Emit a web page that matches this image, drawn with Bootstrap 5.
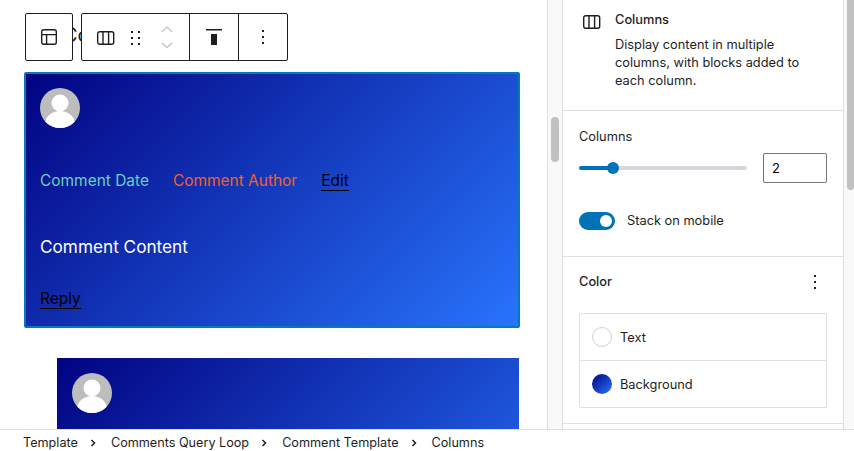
<!DOCTYPE html>
<html lang="en">
<head>
<meta charset="utf-8">
<title>Columns</title>
<link href="https://cdn.jsdelivr.net/npm/bootstrap@5.3.0/dist/css/bootstrap.min.css" rel="stylesheet">
<style>
html,body{height:451px;overflow:hidden;}
body{font-family:Inter,"Liberation Sans",sans-serif;font-size:12.8px;color:#1e1e1e;background:#fff;}
.shell{height:451px;}
.workarea{height:429px;overflow:hidden;}
.canvas-pane{width:547px;flex:none;overflow:hidden;position:relative;padding:0 27px 0 24px;}
.bg-title{font-size:20px;line-height:24px;height:72px;padding:23px 0 0 39px;margin:0;font-weight:400;color:#1e1e1e;}
.comment-block{height:256px;border:2px solid #007cba;border-radius:2px;padding:14px;background:linear-gradient(135deg,#020381 0%,#2874fc 100%);color:#fff;font-size:15.46px;}
.comment-nested{margin:30px 1px 0 33px;border:0;border-radius:0;padding:15px;}
.avatar-svg{display:block;width:40px;height:40px;}
.meta-row{gap:24px;margin-top:43px;line-height:20px;}
.c-date{color:#68d0c0;}
.c-author{color:#f0602a;}
.c-link{color:#000;text-decoration:none;border-bottom:1px solid #000;line-height:19px;display:inline-block;}
.c-body{margin-top:44px;line-height:24px;font-size:17.2px;}
.c-reply{margin-top:28px;}
.tool-group{position:absolute;top:13px;height:48px;background:#fff;border:1px solid #1e1e1e;border-radius:2px;display:flex;}
.tg-a{left:25px;width:48px;}
.tg-b{left:81px;width:207px;}
.tool-cell{display:flex;align-items:center;justify-content:center;height:100%;}
.tool-cell+.tool-cell{border-left:1px solid #1e1e1e;}
.cell-move{width:107px;position:relative;}
.cell-align{width:49px;}
.cell-more{width:49px;}
.rail{width:15px;flex:none;background:#f9f9f9;border-left:1px solid #e0e0e0;position:relative;}
.rail-thumb{width:8px;height:45px;background:#c1c1c1;border-radius:4px;margin:117px 0 0 3px;}
.inspector{width:282px;flex:none;border-left:1px solid #e0e0e0;border-right:1px solid #e0e0e0;background:#fff;}
.rail-end{width:10px;flex:none;background:#f9f9f9;}
.rail-end-thumb{width:7px;height:190px;background:#c1c1c1;border-radius:0 0 4px 4px;margin-left:3px;}
.card-head{height:111px;padding:11px 16px 0 20px;border-bottom:1px solid #e0e0e0;gap:14px;}
.card-title{font-weight:500;line-height:17px;margin-bottom:8px;}
.card-desc{line-height:18px;width:200px;}
.panel-settings{height:146px;padding:17px 16px 0;border-bottom:1px solid #e0e0e0;}
.lbl{line-height:18px;margin-bottom:7px;}
.range-row{gap:16px;height:30px;}
.wp-range{width:168px;height:14px;flex:none;padding:0;}
.wp-range::-webkit-slider-runnable-track{height:4px;border-radius:2px;background:linear-gradient(90deg,#0073b7 0 34px,#d5d8dd 34px);}
.wp-range::-webkit-slider-thumb{width:12px;height:12px;margin-top:-4px;border-radius:50%;background:#0073b7;border:0;-webkit-appearance:none;}
.num-box{width:64px;height:30px;padding:0 8px;font-size:13px;border:1px solid #757575;border-radius:2px;color:#000;font-family:inherit;}
.switch-row{margin-top:28px;padding:0;min-height:0;gap:12px;}
.switch-row .wp-switch{width:36px;height:18px;margin:0;float:none;background-color:#0073b7;border:0;flex:none;--bs-form-switch-bg:none;background-image:none;position:relative;border-radius:9px;}
.wp-switch::after{content:"";position:absolute;right:3px;top:3px;width:12px;height:12px;border-radius:50%;background:#fff;}
.switch-row label{line-height:18px;padding-top:1px;}
.panel-color{height:167px;padding:15px 16px 0;border-bottom:1px solid #e0e0e0;}
.color-head{font-weight:500;line-height:20px;margin-bottom:21px;}
.color-dots{margin-right:10px;}
.color-list{border-radius:2px;--bs-list-group-border-color:#e0e0e0;}
.color-list .list-group-item{height:48px;padding:0 12px;gap:8px;font-size:12.8px;color:#1e1e1e;}
.color-list .list-group-item+.list-group-item{height:47px;}
.item-label{padding-top:2px;}
.swatch{width:20px;height:20px;border-radius:50%;flex:none;}
.swatch-empty{border:1px solid #d0d0d0;background:#fff;}
.swatch-grad{background:linear-gradient(135deg,#020381 0%,#2874fc 100%);}
.crumbs{height:22px;border-top:1px solid #e0e0e0;background:#fff;padding:5px 0 0 23px;white-space:nowrap;font-size:12.65px;}
.crumb-sep{width:6px;height:8px;margin:0 15px 0 12px;flex:none;}
</style>
</head>
<body>
<div class="shell d-flex flex-column">
  <div class="workarea d-flex">
    <div class="canvas-pane">
      <h2 class="bg-title">Comments</h2>
      <div class="comment-block">
        <svg class="avatar-svg" viewBox="0 0 40 40"><defs><clipPath id="ca"><circle cx="20" cy="20" r="20"/></clipPath></defs><g clip-path="url(#ca)"><rect width="40" height="40" fill="#bdbdbd"/><circle cx="20" cy="15" r="8.5" fill="#fff"/><ellipse cx="20" cy="36" rx="15" ry="13" fill="#fff"/></g></svg>
        <div class="meta-row d-flex"><span class="c-date">Comment Date</span><span class="c-author">Comment Author</span><a class="c-link" href="#">Edit</a></div>
        <div class="c-body">Comment Content</div>
        <div class="c-reply"><a class="c-link" href="#">Reply</a></div>
      </div>
      <div class="comment-block comment-nested">
        <svg class="avatar-svg" viewBox="0 0 40 40"><defs><clipPath id="cb"><circle cx="20" cy="20" r="20"/></clipPath></defs><g clip-path="url(#cb)"><rect width="40" height="40" fill="#bdbdbd"/><circle cx="20" cy="15" r="8.5" fill="#fff"/><ellipse cx="20" cy="36" rx="15" ry="13" fill="#fff"/></g></svg>
      </div>
      <div class="tool-group tg-a">
        <div class="tool-cell w-100">
          <svg width="16" height="16" viewBox="0 0 16 16" fill="none" stroke="#1e1e1e" stroke-width="1.4"><rect x=".7" y=".7" width="14.6" height="14.6" rx="2"/><path d="M.7 5.600h14.600M5.600 5.600v9.700"/></svg>
        </div>
      </div>
      <div class="tool-group tg-b">
        <div class="tool-cell cell-move">
          <svg class="position-absolute" style="left:15px;top:17px" width="18" height="14" viewBox="0 0 18 14" fill="none" stroke="#1e1e1e" stroke-width="1.4"><rect x=".7" y=".7" width="16" height="12.6" rx="2"/><path d="M6 .7v12.600M11.600 .7v12.600"/></svg>
          <svg class="position-absolute" style="left:49px;top:16px" width="10" height="16" viewBox="0 0 10 16" fill="#1e1e1e"><rect x="0" y="1" width="2" height="2"/><rect x="7" y="1" width="2" height="2"/><rect x="0" y="7" width="2" height="2"/><rect x="7" y="7" width="2" height="2"/><rect x="0" y="13" width="2" height="2"/><rect x="7" y="13" width="2" height="2"/></svg>
          <svg class="position-absolute" style="left:78px;top:11px" width="14" height="24" viewBox="0 0 14 24" fill="none" stroke="#c4c4c4" stroke-width="1.4"><path d="M2 7l5-5 5 5M2 18l5 4.500 5-4.500"/></svg>
        </div>
        <div class="tool-cell cell-align">
          <svg width="18" height="18" viewBox="0 0 18 18" fill="#1e1e1e"><rect x="1" y="1" width="16" height="1.500"/><rect x="6" y="6" width="6" height="11"/></svg>
        </div>
        <div class="tool-cell cell-more">
          <svg width="4" height="16" viewBox="0 0 4 16" fill="#1e1e1e"><rect x="1" y="1" width="2" height="2"/><rect x="1" y="7" width="2" height="2"/><rect x="1" y="13" width="2" height="2"/></svg>
        </div>
      </div>
    </div>
    <div class="rail"><div class="rail-thumb"></div></div>
    <div class="inspector">
      <div class="card-head d-flex">
        <svg class="mt-1" width="18" height="14" viewBox="0 0 18 14" fill="none" stroke="#1e1e1e" stroke-width="1.4"><rect x=".7" y=".7" width="16" height="12.6" rx="2"/><path d="M6 .7v12.600M11.600 .7v12.600"/></svg>
        <div>
          <div class="card-title">Columns</div>
          <div class="card-desc">Display content in multiple columns, with blocks added to each column.</div>
        </div>
      </div>
      <div class="panel-settings">
        <div class="lbl">Columns</div>
        <div class="range-row d-flex align-items-center">
          <input type="range" class="form-range wp-range" min="1" max="6.5" step="0.5" value="2" aria-label="Columns">
          <input type="text" class="num-box" value="2" aria-label="Columns value">
        </div>
        <div class="form-check form-switch switch-row d-flex align-items-center">
          <input class="form-check-input wp-switch" type="checkbox" role="switch" id="stack" checked>
          <label class="form-check-label" for="stack">Stack on mobile</label>
        </div>
      </div>
      <div class="panel-color">
        <div class="color-head d-flex justify-content-between align-items-center">
          <span>Color</span>
          <svg class="color-dots" width="4" height="16" viewBox="0 0 4 16" fill="#1e1e1e"><rect x="1" y="1" width="2" height="2"/><rect x="1" y="7" width="2" height="2"/><rect x="1" y="13" width="2" height="2"/></svg>
        </div>
        <div class="list-group color-list">
          <div class="list-group-item d-flex align-items-center"><span class="swatch swatch-empty"></span><span class="item-label">Text</span></div>
          <div class="list-group-item d-flex align-items-center"><span class="swatch swatch-grad"></span><span class="item-label">Background</span></div>
        </div>
      </div>
    </div>
    <div class="rail-end"><div class="rail-end-thumb"></div></div>
  </div>
  <div class="crumbs d-flex align-items-center">
    <span>Template</span>
    <svg class="crumb-sep" viewBox="0 0 6 8" fill="none" stroke="#1e1e1e" stroke-width="1.500"><path d="M1.500 1l3 3-3 3"/></svg>
    <span>Comments Query Loop</span>
    <svg class="crumb-sep" viewBox="0 0 6 8" fill="none" stroke="#1e1e1e" stroke-width="1.500"><path d="M1.500 1l3 3-3 3"/></svg>
    <span>Comment Template</span>
    <svg class="crumb-sep" viewBox="0 0 6 8" fill="none" stroke="#1e1e1e" stroke-width="1.500"><path d="M1.500 1l3 3-3 3"/></svg>
    <span>Columns</span>
  </div>
</div>
<script src="https://cdn.jsdelivr.net/npm/bootstrap@5.3.0/dist/js/bootstrap.bundle.min.js"></script>
</body>
</html>
